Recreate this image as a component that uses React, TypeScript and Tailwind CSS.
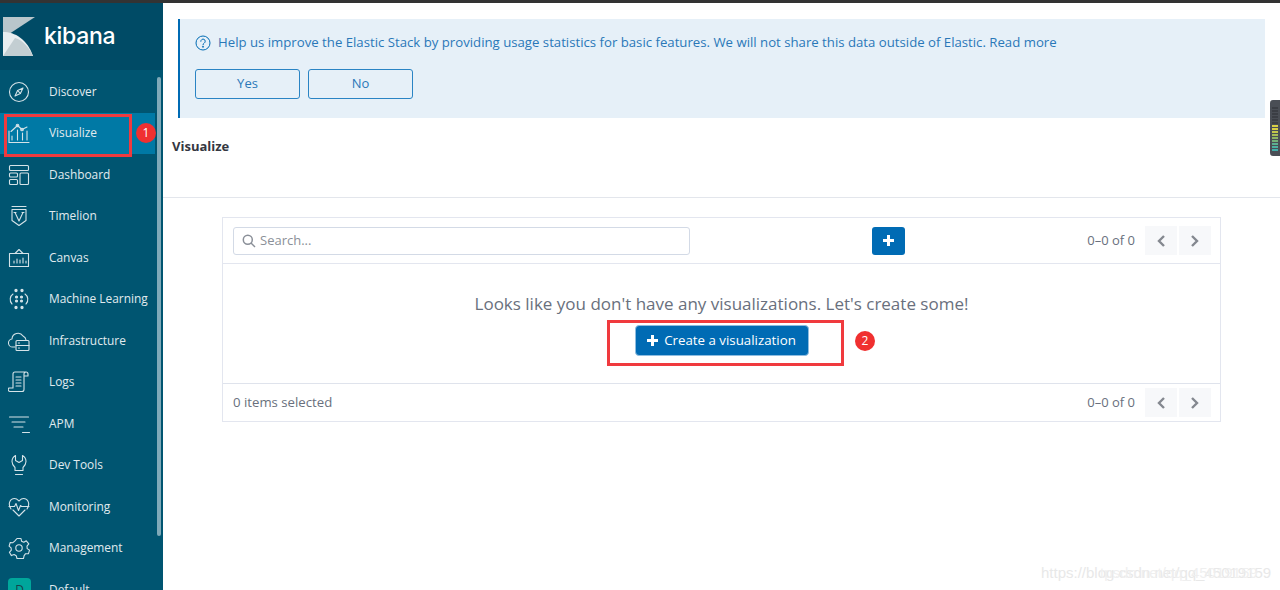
import React from "react";

const S = ({ children }: { children: React.ReactNode }) => (
  <svg width="22" height="22" viewBox="0 0 22 22" fill="none" stroke="#d5e3e8" strokeWidth="1.1" strokeLinecap="round" strokeLinejoin="round">
    {children}
  </svg>
);

const icons: Record<string, React.ReactNode> = {
  Discover: (<S><circle cx="11" cy="11" r="9.5" /><path d="M15 7 9.600 9.600 7 15 12.400 12.400Z" /><path d="M9.600 9.600 12.400 12.400" /></S>),
  Visualize: (<S><path d="M1 9v11.500h20" /><path d="M3 9.500 9.500 3.500 14 7.500 19 5" /><circle cx="9.500" cy="3.500" r="1.300" /><circle cx="14" cy="7.500" r="1.300" /><path d="M4 18v-4M9.500 18V8M14.500 18v-7M19 18V9" /></S>),
  Dashboard: (<S><rect x="1.500" y="1.500" width="19" height="5" rx="1" /><rect x="1.500" y="9" width="8" height="4" rx="1" /><rect x="1.500" y="15.500" width="8" height="5" rx="1" /><rect x="12" y="9" width="8.500" height="11.500" rx="1" /></S>),
  Timelion: (<S><path d="M4 1.500h14M4 4.500h14v11l-7 5-7-5z" /><path d="M7 7.500l4 8.500 4-8.500M6 7.500h2M14 7.500h2" /></S>),
  Canvas: (<S><path d="M1.500 6.500h19v13h-19zM7 6.500 11 2.500l4 4" /><path d="M6 16v-2M9 16v-4M12 16v-3M15 16v-5M18 16v-2" /></S>),
  "Machine Learning": (<S><circle cx="8" cy="2.500" r="1.100" fill="#d5e3e8" /><circle cx="14" cy="2.500" r="1.100" fill="#d5e3e8" /><circle cx="8" cy="19.500" r="1.100" fill="#d5e3e8" /><circle cx="14" cy="19.500" r="1.100" fill="#d5e3e8" /><circle cx="8.500" cy="9" r="1" fill="#d5e3e8" /><circle cx="13.500" cy="9" r="1" fill="#d5e3e8" /><circle cx="8.500" cy="13" r="1" fill="#d5e3e8" /><circle cx="13.500" cy="13" r="1" fill="#d5e3e8" /><path d="M5 6C2 8 1 13 4 16M17 6c3 2 4 7 1 10" /></S>),
  Infrastructure: (<S><path d="M7 17H5a4 4 0 0 1-1-8 6 6 0 0 1 11-3 5 5 0 0 1 3 4" /><rect x="8" y="10.500" width="13" height="10" rx="1" /><path d="M8 15.500h13M10.500 13h1M10.500 18h1" /></S>),
  Logs: (<S><path d="M2 20.500h12a2 2 0 0 0 2-2V3a2 2 0 0 1 2-2H7a2 2 0 0 0-2 2v14H1a2 2 0 0 0 1 3.500zM18 1a2 2 0 0 1 2 2v2h-4" /><path d="M8 6h5M8 9h5M8 12h5M8 15h5" /></S>),
  APM: (<S><path d="M1.500 4h19M4 9h13M6 14h9M14.500 19.500h7" /></S>),
  "Dev Tools": (<S><path d="M7.500 1.500v5l3.500 2 3.500-2v-5c2.500 1.500 3.500 4 3.500 6 0 2.500-1.500 4.500-3 6v3h-8v-3c-1.500-1.500-3-3.500-3-6 0-2 1-4.500 3.500-6zM7.500 20.500h7" /></S>),
  Monitoring: (<S><path d="M3 13C-.5 8 2 2.500 6.500 2.500 9 2.500 10 4 11 5c1-1 2-2.500 4.500-2.500C20 2.500 22.500 8 19 13" /><path d="M1 10.500h5.500l1.500-3 2.500 7 2-5 1 1h7.500M5 14l6 6 6-6" /></S>),
  Management: (<S><circle cx="11" cy="11" r="3.200" /><path d="M9 1.500h4l.6 2.800 2.200 1 2.500-1.500 2.500 3.100-1.800 2.200.2 2.500 2.300 1.500-1 3.500-2.900.1-1.500 2-.6 2.800H9l-.8-2.800-2.100-1.100-2.700 1-2-3.300 1.900-2.100-.2-2.400-2-1.700L2.200 5.500l2.700.2 1.800-1.500z" /></S>),
};

const items = ["Discover", "Visualize", "Dashboard", "Timelion", "Canvas", "Machine Learning", "Infrastructure", "Logs", "APM", "Dev Tools", "Monitoring", "Management"];

const Pager = () => (
  <div className="flex items-center">
    <span className="text-[13px] text-[#69707d] mr-[10px]">0–0 of 0</span>
    <div className="w-[32px] h-[29px] bg-[#f7f8fa] flex items-center justify-center mr-[2px]">
      <svg width="12" height="14" viewBox="0 0 12 14" fill="none" stroke="#84888f" strokeWidth="2.400"><path d="M9 2 4 7l5 5" /></svg>
    </div>
    <div className="w-[32px] h-[29px] bg-[#f7f8fa] flex items-center justify-center">
      <svg width="12" height="14" viewBox="0 0 12 14" fill="none" stroke="#84888f" strokeWidth="2.400"><path d="m3 2 5 5-5 5" /></svg>
    </div>
  </div>
);

const Plus = () => (
  <svg width="11" height="11" viewBox="0 0 11 11" fill="#ffffff"><path d="M4 0h3v4h4v3H7v4H4V7H0V4h4z" /></svg>
);

const Badge = ({ n, className }: { n: string; className: string }) => (
  <div className={"absolute w-[20px] h-[20px] rounded-full bg-[#f03030] text-white text-[12px] flex items-center justify-center " + className}>{n}</div>
);

export default function App() {
  return (
    <div className="relative w-[1280px] h-[590px] overflow-hidden bg-white flex flex-col font-['Open_Sans',sans-serif]">
      <div className="h-[3px] bg-[#333333] shrink-0" />
      <div className="flex flex-1 min-h-0">
        <aside className="relative w-[163px] shrink-0 bg-[#005571] overflow-hidden">
          <div className="h-[67px] bg-[#004b66] flex items-center">
            <svg width="34" height="40" viewBox="0 0 34 40" className="ml-[2px] mt-[1px]">
              <path d="M1 0h32L1 21z" fill="#b9c6cb" />
              <path d="M1 15 C13 15 25 22 31 39H1z" fill="#e9eef0" />
              <path d="M1 39 L13 21 C21 23 27 31 31 39z" fill="#c3ced2" />
            </svg>
            <span className="ml-[8px] text-[23px] leading-none text-white font-['Inter',sans-serif] font-medium tracking-[-0.300px]">kibana</span>
          </div>
          <nav className="flex flex-col pt-[1px]">
            {items.map((it) => (
              <div key={it} className={"h-[41.500px] flex items-center " + (it === "Visualize" ? "bg-[#0079a5] w-[155px]" : "")}>
                <div className="w-[49px] pl-[8px] shrink-0 flex">{icons[it]}</div>
                <span className="text-[11.900px] text-[#e0ebef] whitespace-nowrap">{it}</span>
              </div>
            ))}
            <div className="h-[41.500px] flex items-center">
              <div className="w-[49px] pl-[8px] shrink-0">
                <div className="w-[23px] h-[23px] rounded-[4px] bg-[#00a69b] text-[12px] text-[#1a3f4a] flex items-center justify-center">D</div>
              </div>
              <span className="text-[11.900px] text-[#e0ebef]">Default</span>
            </div>
          </nav>
          <div className="absolute left-[157px] top-[74px] w-[4px] h-[459px] bg-[#7fa9b8] rounded-[2px]" />
        </aside>
        <main className="flex-1 min-w-0 flex flex-col">
          <div className="mt-[16px] ml-[15px] mr-[15px] h-[99px] bg-[#e6f0f8] border-l-2 border-[#006bb4] pl-[15px] pt-[15px]">
            <div className="flex items-center h-[18px]">
              <svg width="16" height="16" viewBox="0 0 16 16" fill="none" stroke="#006bb4" strokeWidth="1"><circle cx="8" cy="8" r="7" /><path d="M5.800 6.300a2.200 2.200 0 1 1 3.400 1.800c-.8.500-1.200.9-1.200 1.700" strokeLinecap="round" /><circle cx="8" cy="11.800" r=".5" fill="#006bb4" /></svg>
              <span className="ml-[7px] text-[13.190px] text-[#2a78b8] whitespace-nowrap">Help us improve the Elastic Stack by providing usage statistics for basic features. We will not share this data outside of Elastic. Read more</span>
            </div>
            <div className="flex gap-[8px] mt-[17px]">
              <div className="w-[105px] h-[30px] rounded-[3px] border border-[#2a84c4] text-[13px] text-[#2a78b8] flex items-center justify-center">Yes</div>
              <div className="w-[105px] h-[30px] rounded-[3px] border border-[#2a84c4] text-[13px] text-[#2a78b8] flex items-center justify-center">No</div>
            </div>
          </div>
          <div className="h-[80px] shrink-0 border-b border-[#e3e6ec] pl-[9px] pt-[19px]">
            <h1 className="text-[13px] leading-[18px] font-bold text-[#343741]">Visualize</h1>
          </div>
          <section className="mt-[19px] ml-[59px] w-[999px] h-[205px] border border-[#e3e6ef] flex flex-col">
            <div className="h-[46px] shrink-0 border-b border-[#e3e6ef] flex items-center pl-[10px] pr-[9px]">
              <div className="w-[457px] h-[28px] rounded-[3px] border border-[#d3dae6] flex items-center pl-[8px]">
                <svg width="14" height="14" viewBox="0 0 14 14" fill="none" stroke="#8a8f98" strokeWidth="1.500"><circle cx="5.800" cy="5.800" r="4.500" /><path d="m9 9 4 4" /></svg>
                <span className="ml-[4px] text-[13px] text-[#8b9098]">Search...</span>
              </div>
              <div className="ml-[182px] w-[33px] h-[28px] rounded-[3px] bg-[#006bb4] flex items-center justify-center"><Plus /></div>
              <div className="ml-auto"><Pager /></div>
            </div>
            <div className="flex-1 min-h-0 flex flex-col items-center pt-[28px]">
              <p className="text-[17px] leading-[24px] text-[#69707d] whitespace-nowrap">Looks like you don't have any visualizations. Let's create some!</p>
              <div className="mt-[9px] w-[174px] h-[31px] rounded-[4px] bg-[#006bb4] border border-[#8fbde0] flex items-center justify-center text-[13.300px] text-white">
                <Plus />
                <span className="ml-[6px]">Create a visualization</span>
              </div>
            </div>
            <div className="h-[38px] shrink-0 border-t border-[#dfe3ec] flex items-center justify-between pl-[10px] pr-[9px]">
              <span className="text-[13.200px] text-[#69707d]">0 items selected</span>
              <Pager />
            </div>
          </section>
        </main>
      </div>

      <div className="absolute left-[4px] top-[114px] w-[128px] h-[43px] border-[3px] border-[#f03a3e]" />
      <Badge n="1" className="left-[136px] top-[123px]" />
      <div className="absolute left-[607px] top-[320px] w-[237px] h-[46px] border-[3px] border-[#f03a3e]" />
      <Badge n="2" className="left-[855px] top-[331px]" />

      <div className="absolute left-[1270px] top-[100px] w-[10px] h-[56px] rounded-l-[3px] bg-[#4a4e55] pl-[2px] pt-[7px] flex flex-col gap-[1px]">
        {["#3b3e44", "#3b3e44", "#3b3e44", "#3b3e44", "#3b3e44", "#3b3e44", "#d8cf45", "#d8cf45", "#c4c74a", "#a8bd55", "#8db563", "#74b078", "#5cb090", "#4cb0a0", "#40aca8"].map((c, i) => (
          <div key={i} className="w-[6px] h-[2px]" style={{ background: c }} />
        ))}
      </div>

      <span className="absolute left-[1041px] top-[564px] text-[15px] leading-[18px] text-[#e8e8e8] font-['Liberation_Sans',sans-serif] whitespace-nowrap">https://blog.csdn.net/qq_45019159</span>
      <span className="absolute left-[1100px] top-[564px] text-[15px] leading-[18px] text-[#efefef] font-['Liberation_Sans',sans-serif] whitespace-nowrap">tpsdn.net/qq_45019159</span>
    </div>
  );
}
